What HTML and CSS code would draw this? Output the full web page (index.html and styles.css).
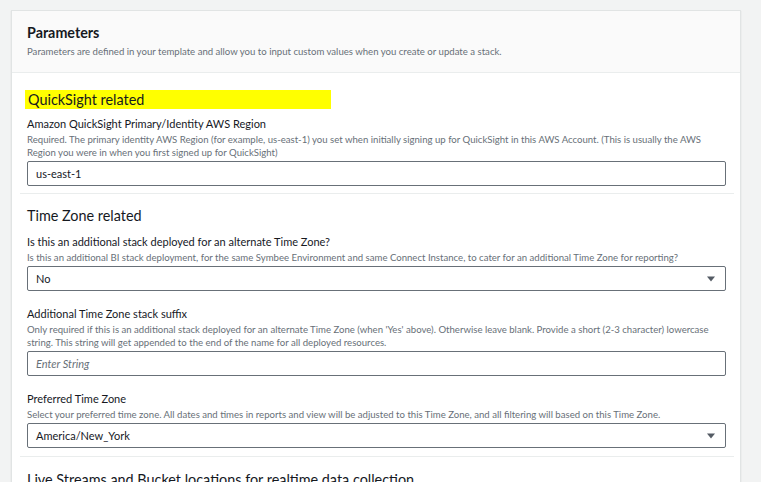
FILE: index.html
```html
<!DOCTYPE html>
<html>
<head>
<meta charset="utf-8">
<link rel="stylesheet" href="styles.css">
</head>
<body>
<div class="card">
  <div class="card-header">
    <h2 class="title">Parameters</h2>
    <p class="subtitle">Parameters are defined in your template and allow you to input custom values when you create or update a stack.</p>
  </div>
  <div class="card-body">
    <section class="group">
      <div class="hl-wrap"><span class="highlight">QuickSight related</span></div>
      <div class="field first">
        <div class="label">Amazon QuickSight Primary/Identity AWS Region</div>
        <div class="desc">Required. The primary identity AWS Region (for example, us-east-1) you set when initially signing up for QuickSight in this AWS Account. (This is usually the AWS Region you were in when you first signed up for QuickSight)</div>
        <div class="input">us-east-1</div>
      </div>
    </section>
    <section class="group tz">
      <h3 class="group-title">Time Zone related</h3>
      <div class="field first">
        <div class="label">Is this an additional stack deployed for an alternate Time Zone?</div>
        <div class="desc">Is this an additional BI stack deployment, for the same Symbee Environment and same Connect Instance, to cater for an additional Time Zone for reporting?</div>
        <div class="input select"><span>No</span><svg class="caret" width="8" height="6" viewBox="0 0 8 6"><path d="M0 0.5H8L4 5.5Z" fill="#545b64"/></svg></div>
      </div>
      <div class="field">
        <div class="label">Additional Time Zone stack suffix</div>
        <div class="desc">Only required if this is an additional stack deployed for an alternate Time Zone (when 'Yes' above). Otherwise leave blank. Provide a short (2-3 character) lowercase string. This string will get appended to the end of the name for all deployed resources.</div>
        <div class="input placeholder">Enter String</div>
      </div>
      <div class="field">
        <div class="label">Preferred Time Zone</div>
        <div class="desc">Select your preferred time zone. All dates and times in reports and view will be adjusted to this Time Zone, and all filtering will based on this Time Zone.</div>
        <div class="input select"><span>America/New_York</span><svg class="caret" width="8" height="6" viewBox="0 0 8 6"><path d="M0 0.5H8L4 5.5Z" fill="#545b64"/></svg></div>
      </div>
    </section>
    <section class="group last">
      <h3 class="group-title">Live Streams and Bucket locations for realtime data collection</h3>
    </section>
  </div>
</div>
</body>
</html>
```
FILE: styles.css
```css
html, body {
  margin: 0;
  padding: 0;
  background: #f2f3f3;
  font-family: Lato, "Open Sans", sans-serif;
  color: #16191f;
}
body {
  padding: 10px 20px 0 11px;
  height: 482px;
  box-sizing: border-box;
  overflow: hidden;
}
.card {
  background: #ffffff;
  border: 1px solid #e1e4e4;
  border-bottom: none;
  box-shadow: 0 1px 1px rgba(0,28,36,0.15);
  height: 480px;
}
.card-header {
  background: #fafafa;
  border-bottom: 1px solid #eaeded;
  padding: 12px 16px 0 15px;
  height: 49px;
}
.title {
  margin: 0;
  font-size: 14.3px;
  font-weight: 700;
  line-height: 20px;
}
.subtitle {
  margin: 2px 0 0 0;
  font-size: 9.6px;
  line-height: 14px;
  color: #687078;
}
.card-body {
  padding: 0 6px 0 8px;
}
.group {
  border-bottom: 1px solid #eaeded;
  padding: 0 8px 7px 7px;
}
.group.tz {
  padding-bottom: 8px;
}
.group.last {
  border-bottom: none;
}
.group.last .group-title {
  padding-top: 13px;
}
.hl-wrap {
  padding-top: 17px;
  margin-left: -2px;
}
.highlight {
  display: block;
  width: 303px;
  height: 19px;
  background: #ffff00;
  font-size: 14.4px;
  line-height: 19px;
  padding-left: 3px;
}
.group-title {
  margin: 0;
  padding-top: 12px;
  font-size: 14.4px;
  font-weight: 400;
  line-height: 20px;
}
.field {
  margin-top: 16px;
}
.field.first {
  margin-top: 8px;
}
.group-title + .field.first {
  margin-top: 9px;
}
.label {
  font-size: 11px;
  line-height: 14px;
}
.desc {
  font-size: 9.6px;
  line-height: 13px;
  color: #687078;
  margin-top: 1.5px;
}
.input {
  margin-top: 2.5px;
  height: 25px;
  box-sizing: border-box;
  border: 1px solid #687078;
  border-radius: 2px;
  padding: 0 10px 0 8px;
  font-size: 11px;
  line-height: 23px;
  display: flex;
  align-items: center;
  justify-content: space-between;
}
.placeholder {
  font-style: italic;
  color: #687078;
}
.caret {
  display: block;
}
```
